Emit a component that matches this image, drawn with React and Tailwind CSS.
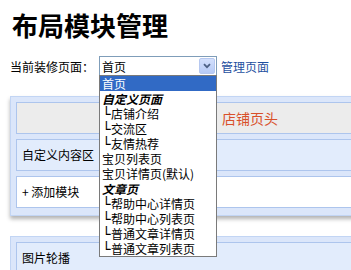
export default function App() {
  const items = [
    { t: '首页', sel: true },
    { t: '自定义页面', h: true },
    { t: '店铺介绍', sub: true },
    { t: '交流区', sub: true },
    { t: '友情热荐', sub: true },
    { t: '宝贝列表页' },
    { t: '宝贝详情页(默认)' },
    { t: '文章页', h: true },
    { t: '帮助中心详情页', sub: true },
    { t: '帮助中心列表页', sub: true },
    { t: '普通文章详情页', sub: true },
    { t: '普通文章列表页', sub: true },
  ];
  return (
    <div className="relative w-[351px] h-[270px] overflow-hidden bg-white text-black font-['Noto_Sans_CJK_SC',sans-serif]">
      <h1 className="ml-[12px] pt-[10px] text-[26px] leading-[30px] font-bold">布局模块管理</h1>
      <div className="mt-[16px] ml-[10px] flex items-center h-[20px] text-[12px] leading-[15px]">
        <span>当前装修页面：</span>
        <div className="relative ml-[5px] w-[118px] h-[20px] border border-[#7f9db9] bg-white flex items-center">
          <span className="pl-[2px] flex-1">首页</span>
          <div className="mr-[1px] w-[16px] h-[16px] rounded-[2px] border border-[#b6c8f0] bg-gradient-to-b from-[#d3e0fc] to-[#b7cbf6] flex items-center justify-center">
            <svg width="8" height="6" viewBox="0 0 8 6">
              <path d="M1 1.2 L4 4.2 L7 1.2" stroke="#4d6185" strokeWidth="1.8" fill="none" />
            </svg>
          </div>
          <div className="absolute left-[-1px] top-[18px] w-[118px] border border-[#7a7a7a] bg-white z-10">
            {items.map((it, i) => (
              <div
                key={i}
                className={
                  'h-[15px] leading-[15px] pl-[2px] whitespace-nowrap flex items-start ' +
                  (it.sel ? 'bg-[#316ac5] text-white ' : '') +
                  (it.h ? 'font-bold italic ' : '')
                }
              >
                {it.sub && (
                  <span className="inline-block w-[7px] h-[13px] leading-[13px] text-[14px] mt-[2px] mr-[2px] font-['DejaVu_Sans_Mono',monospace]">└</span>
                )}
                <span>{it.t}</span>
              </div>
            ))}
          </div>
        </div>
        <span className="ml-[4px] text-[#1e4fa0]">管理页面</span>
      </div>

      <div className="mt-[20px] ml-[10px] w-[470px] border border-[#c2d5f4] bg-[#dbe6fa] px-[5px] pt-[5px] pb-[7px] flex flex-col gap-[5px] shadow-[0_3px_4px_rgba(0,0,0,0.3)] text-[12px]">
        <div className="h-[32px] border border-[#adc5ed] bg-[#ececec] flex items-center pl-[205px] text-[14px] text-[#d9502a]">
          店铺页头
        </div>
        <div className="h-[32px] border border-[#adc5ed] bg-[#e2ecfc] flex items-center pl-[5px]">
          自定义内容区
        </div>
        <div className="h-[32px] border border-[#adc5ed] bg-white flex items-center pl-[5px]">
          + 添加模块
        </div>
      </div>

      <div className="mt-[20px] ml-[10px] w-[470px] h-[60px] border border-[#c2d5f4] bg-[#dbe6fa] px-[5px] pt-[5px] text-[12px]">
        <div className="h-[40px] border border-[#adc5ed] bg-[#e2ecfc] pt-[7px] pl-[5px] leading-[15px]">
          图片轮播
        </div>
      </div>
    </div>
  );
}
